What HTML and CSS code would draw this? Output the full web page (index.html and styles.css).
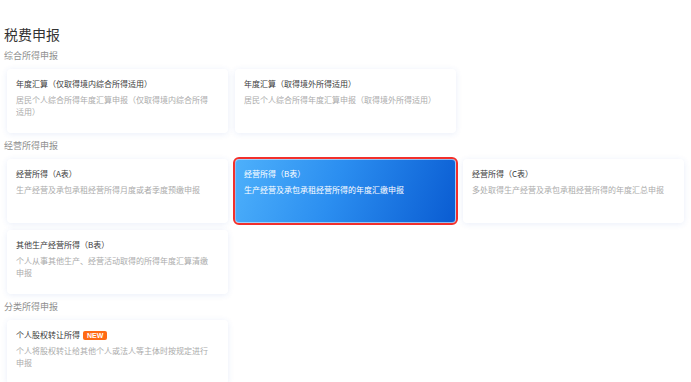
FILE: index.html
```html
<!DOCTYPE html>
<html lang="zh-CN">
<head>
<meta charset="utf-8">
<title>税费申报</title>
<link rel="stylesheet" href="styles.css">
</head>
<body>
<div class="page">
  <h1 class="page-title">税费申报</h1>

  <h2 class="section-title">综合所得申报</h2>
  <div class="grid">
    <div class="card">
      <div class="card-title">年度汇算（仅取得境内综合所得适用）</div>
      <div class="card-desc">居民个人综合所得年度汇算申报（仅取得境内综合所得适用）</div>
    </div>
    <div class="card">
      <div class="card-title">年度汇算（取得境外所得适用）</div>
      <div class="card-desc">居民个人综合所得年度汇算申报（取得境外所得适用）</div>
    </div>
  </div>

  <h2 class="section-title">经营所得申报</h2>
  <div class="grid">
    <div class="card">
      <div class="card-title">经营所得（A表）</div>
      <div class="card-desc">生产经营及承包承租经营所得月度或者季度预缴申报</div>
    </div>
    <div class="card card-active">
      <div class="card-title">经营所得（B表）</div>
      <div class="card-desc">生产经营及承包承租经营所得的年度汇缴申报</div>
    </div>
    <div class="card">
      <div class="card-title">经营所得（C表）</div>
      <div class="card-desc">多处取得生产经营及承包承租经营所得的年度汇总申报</div>
    </div>
    <div class="card">
      <div class="card-title">其他生产经营所得（B表）</div>
      <div class="card-desc">个人从事其他生产、经营活动取得的所得年度汇算清缴申报</div>
    </div>
  </div>

  <h2 class="section-title">分类所得申报</h2>
  <div class="grid">
    <div class="card">
      <div class="card-title">个人股权转让所得<span class="badge">NEW</span></div>
      <div class="card-desc">个人将股权转让给其他个人或法人等主体时按规定进行申报</div>
    </div>
  </div>
</div>
</body>
</html>
```

FILE: styles.css
```css
* { box-sizing: border-box; }

html, body {
  margin: 0;
  padding: 0;
  background: #ffffff;
}

body {
  font-family: "Noto Sans CJK SC", "Noto Sans", sans-serif;
  color: #333333;
  text-spacing-trim: space-all;
}

.page {
  padding: 24px 7px 0 4px;
}

.page-title {
  margin: 0;
  font-size: 14px;
  line-height: 20px;
  font-weight: 400;
  color: #333333;
}

.section-title {
  margin: 6px 0 7px 0;
  font-size: 9px;
  line-height: 12px;
  font-weight: 400;
  color: #8f8f8f;
}

.grid {
  display: grid;
  grid-template-columns: repeat(3, 221px);
  gap: 7px;
  margin-left: 3px;
}

.grid + .section-title {
  margin-top: 7px;
}

.card {
  height: 64px;
  padding: 9px 18px 9px 9px;
  background: #ffffff;
  border-radius: 4px;
  box-shadow: 0 1px 6px rgba(40, 90, 200, 0.10);
}

.card-title {
  display: flex;
  align-items: center;
  font-size: 8px;
  line-height: 12px;
  color: #3a3a3a;
}

.card-desc {
  margin-top: 4px;
  font-size: 8px;
  line-height: 11.5px;
  color: #ababab;
}

.card-active {
  background: linear-gradient(110deg, #4db0fb 0%, #2b8ef0 45%, #0a5cd2 100%);
  border: 1px solid rgba(190, 225, 255, 0.7);
  outline: 2px solid #f2302c;
  box-shadow: none;
  padding: 8px 18px 8px 8px;
}

.card-active .card-title,
.card-active .card-desc {
  color: #ffffff;
}

.badge {
  display: inline-block;
  margin-left: 3px;
  padding: 0 4px;
  height: 9px;
  line-height: 9px;
  font-size: 7px;
  font-weight: 700;
  font-family: "Liberation Sans", sans-serif;
  color: #ffffff;
  background: #ff6a14;
  border-radius: 2px;
}
```
